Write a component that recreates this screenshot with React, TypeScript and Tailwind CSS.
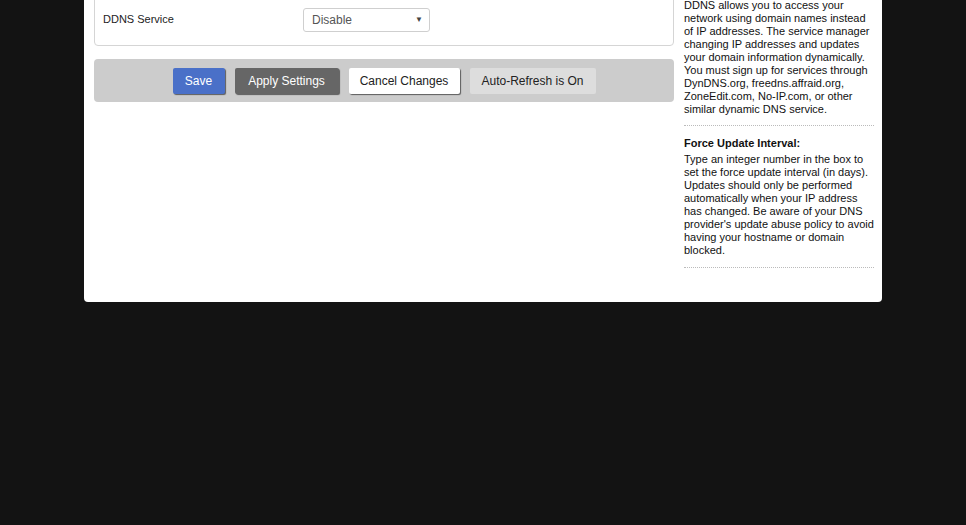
import React from "react";

export default function App() {
  const font = { fontFamily: '"Liberation Sans", Arial, sans-serif' };
  return (
    <div className="min-h-screen w-full bg-[#131313]" style={font}>
      <div className="ml-[84px] w-[798px] bg-white rounded-b-[4px] flex pb-[34px]">
        <div className="w-[600px] px-[10px] flex flex-col">
          <div className="-mt-[11px] border border-[#d5d5d5] rounded-[4px] pt-[18px] pb-[13px] pl-[8px] flex items-center">
            <div className="w-[200px] text-[11px] text-[#222] -mt-[2px]">DDNS Service</div>
            <div className="w-[127px] h-[24px] border border-[#cfcfcf] rounded-[3px] flex items-center justify-between pl-[8px] pr-[6px] text-[12px] text-[#555]">
              <span>Disable</span>
              <span className="text-[8px] text-[#444]">▼</span>
            </div>
          </div>
          <div className="mt-[13px] h-[43px] bg-[#cccccc] rounded-[4px] flex items-center justify-center gap-[10px] text-[12px]">
            <div className="w-[52px] h-[26px] bg-[#4a70c8] text-white rounded-[2px] flex items-center justify-center shadow-[1px_1px_1px_rgba(0,0,0,0.55)]">Save</div>
            <div className="w-[104px] h-[26px] bg-[#666666] text-white rounded-[2px] flex items-center justify-center shadow-[1px_1px_1px_rgba(0,0,0,0.55)]">Apply Settings</div>
            <div className="w-[111px] h-[26px] bg-white text-[#222] rounded-[2px] flex items-center justify-center shadow-[1px_1px_1px_rgba(0,0,0,0.55)]">Cancel Changes</div>
            <div className="w-[126px] h-[26px] bg-[#dddddd] text-[#222] rounded-[2px] flex items-center justify-center">Auto-Refresh is On</div>
          </div>
        </div>
        <div className="w-[190px] text-[11px] leading-[13px] text-[#111]">
          <div className="-mt-[1px] pb-[9px] border-b border-dotted border-[#bbb]">
            DDNS allows you to access your<br />
            network using domain names instead<br />
            of IP addresses. The service manager<br />
            changing IP addresses and updates<br />
            your domain information dynamically.<br />
            You must sign up for services through<br />
            DynDNS.org, freedns.affraid.org,<br />
            ZoneEdit.com, No-IP.com, or other<br />
            similar dynamic DNS service.
          </div>
          <div className="pt-[11px] pb-[10px] border-b border-dotted border-[#bbb]">
            <div className="font-bold mb-[3px]">Force Update Interval:</div>
            Type an integer number in the box to<br />
            set the force update interval (in days).<br />
            Updates should only be performed<br />
            automatically when your IP address<br />
            has changed. Be aware of your DNS<br />
            provider's update abuse policy to avoid<br />
            having your hostname or domain<br />
            blocked.
          </div>
        </div>
      </div>
    </div>
  );
}
